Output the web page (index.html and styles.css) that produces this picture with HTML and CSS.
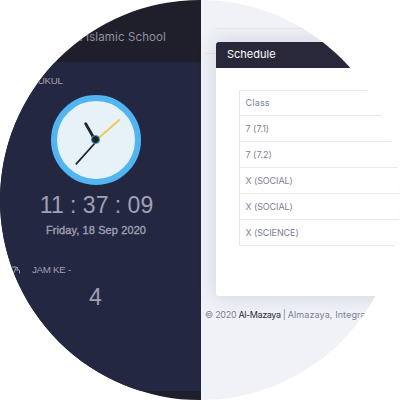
FILE: index.html
```
<!DOCTYPE html>
<html lang="en">
<head>
<meta charset="utf-8">
<title>Schedule</title>
<link rel="stylesheet" href="styles.css">
</head>
<body>
<div class="frame">
  <aside class="sidebar">
    <header class="brand"><span>d Islamic School</span></header>
    <div class="panel">
      <div class="label label-time">PUKUL</div>
      <svg class="clock" viewBox="0 0 90 90">
        <circle cx="45" cy="45" r="42" fill="#e6f2f7" stroke="#50b5f1" stroke-width="6"/>
        <g stroke-linecap="round">
          <path d="M44 45L34.7 28.7" stroke="#222529" stroke-width="2.8"/>
          <path d="M44 48L25.3 68.8" stroke="#222529" stroke-width="1.8"/>
          <path d="M47 43.5L68.2 25" stroke="#f2c756" stroke-width="1.8"/>
        </g>
        <circle cx="44.5" cy="44.5" r="4" fill="#1f2226" stroke="#4297c6" stroke-width="1"/>
      </svg>
      <div class="time">11 : 37 : 09</div>
      <div class="date">Friday, 18 Sep 2020</div>
      <div class="period"><svg class="chart" viewBox="0 0 10 8"><path d="M1 1H5.5L2.5 7.5M6.5 1L6 5M6.5 3L8.5 4.5V7.5" fill="none" stroke="#a0a0b4" stroke-width="1"/></svg><span class="label label-period">JAM KE -</span></div>
      <div class="number">4</div>
    </div>
  </aside>
  <main class="content">
    <div class="rule rule-inset"></div>
    <div class="rule"></div>
    <section class="card">
      <h1 class="card-title"><span>Schedule</span></h1>
      <table class="classes">
        <tr class="head"><td>Class</td></tr>
        <tr><td>7 (7.1)</td></tr>
        <tr><td>7 (7.2)</td></tr>
        <tr><td class="caps">X (SOCIAL)</td></tr>
        <tr><td class="caps">X (SOCIAL)</td></tr>
        <tr><td class="caps">X (SCIENCE)</td></tr>
      </table>
    </section>
    <footer class="footer">© 2020 <b>Al-Mazaya</b> | <span>Almazaya, Integrated</span></footer>
  </main>
</div>
</body>
</html>
```
FILE: styles.css
```
* { box-sizing: border-box; }
body { margin: 0; background: #fff; }
.frame {
  display: flex;
  width: 400px;
  height: 400px;
  overflow: hidden;
  border-radius: 50%;
  font-family: Inter, sans-serif;
}
.sidebar {
  flex: none;
  width: 201px;
  background: #1f1e2b;
  color: #a0a0b4;
  font-family: "Liberation Sans", sans-serif;
}
.brand {
  height: 62px;
  padding: 26px 35px 0 0;
  font: 11.5px/22px Inter, sans-serif;
  letter-spacing: 0.12px;
  color: #9091a5;
  text-align: right;
  white-space: nowrap;
}
.panel {
  display: flex;
  flex-direction: column;
  height: 329px;
  padding-top: 12px;
  background: #242741;
}
.label { font-size: 9.8px; line-height: 14px; letter-spacing: -0.3px; }
.label-time { padding-left: 31.5px; }
.clock { display: block; width: 90px; height: 90px; margin: 7px 0 0 51px; }
.time { width: 193px; margin-top: 5px; font-size: 23px; line-height: 30px; text-align: center; white-space: pre; }
.date { width: 192px; margin-top: 3px; font-size: 11px; line-height: 14px; -webkit-text-stroke: 0.35px #a0a0b4; text-align: center; white-space: nowrap; letter-spacing: 0.1px; }
.period { display: flex; align-items: center; height: 14px; margin-top: 26px; padding-left: 11px; }
.chart { width: 10px; height: 8px; margin-right: 11px; }
.number { width: 191px; margin-top: 7px; font-size: 23px; line-height: 26px; text-align: center; }
.content { flex: 1; min-width: 0; padding-top: 28px; background: #f0f2f8; }
.rule { height: 1px; margin: 24px 0 0 4px; background: #e7e8ed; }
.rule-inset { margin: 0 0 0 15px; }
.card {
  position: relative;
  width: 400px;
  height: 254px;
  margin: -12px 0 0 15px;
  border-radius: 3px;
  background: #fff;
  box-shadow: 0 0 20px rgba(40, 40, 70, .17);
}
.card-title {
  height: 26px;
  margin: 0;
  padding-left: 11px;
  border-radius: 3px 0 0;
  background: #29283a;
  color: #fff;
  font-size: 11px;
  line-height: 25px;
  font-weight: 400;
}
.classes { width: 300px; margin: 22px 0 0 23px; border-collapse: collapse; }
.classes td {
  height: 26px;
  padding: 0 5.5px;
  border: 1px solid #e9e9eb;
  color: #7d7f96;
  font-size: 9px;
  line-height: 24px;
}
.classes .head td { height: 25px; letter-spacing: 0.2px; }
.classes .caps { letter-spacing: -0.1px; }
.footer { padding: 10px 0 0 4px; color: #7c7e94; font-size: 9px; line-height: 18px; letter-spacing: -0.3px; white-space: nowrap; }
.footer b { color: #2a2a3a; font-weight: 400; letter-spacing: -0.4px; }
.footer span { letter-spacing: 0.1px; }
```
